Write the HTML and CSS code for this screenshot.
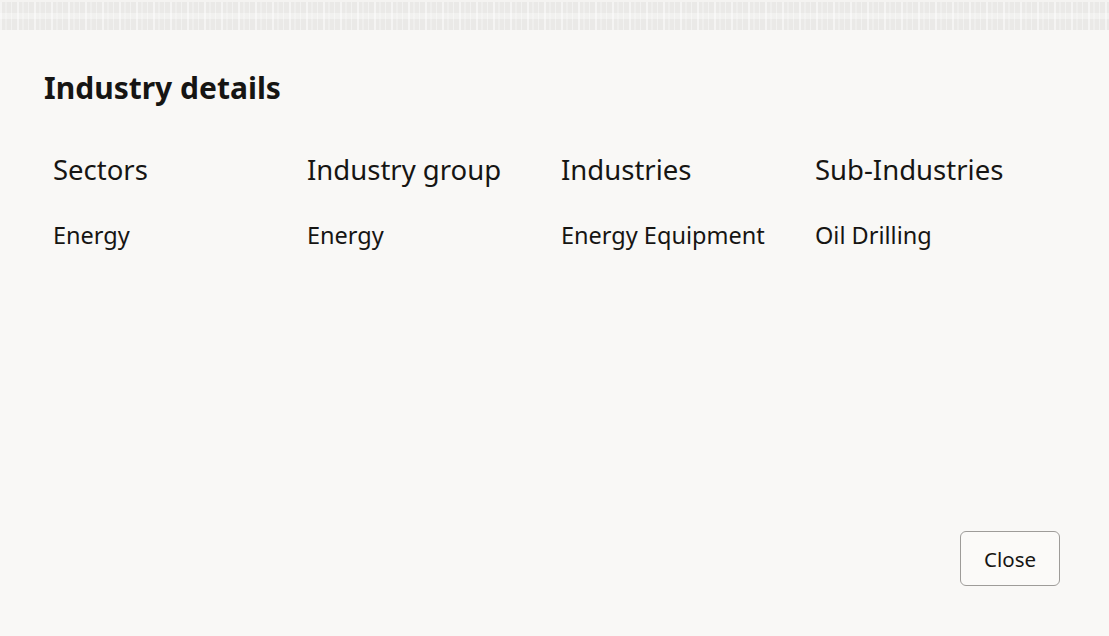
FILE: index.html
```html
<!DOCTYPE html>
<html lang="en">
<head>
    <meta charset="UTF-8">
    <title>Industry details</title>
    <link rel="stylesheet" href="styles.css">
</head>
<body>
    <div class="backdrop-strip"></div>
    <div class="dialog">
        <h1 class="dialog-title">Industry details</h1>
        <div class="details-grid">
            <div class="detail-col">
                <div class="detail-label">Sectors</div>
                <div class="detail-value">Energy</div>
            </div>
            <div class="detail-col">
                <div class="detail-label">Industry group</div>
                <div class="detail-value">Energy</div>
            </div>
            <div class="detail-col">
                <div class="detail-label">Industries</div>
                <div class="detail-value">Energy Equipment</div>
            </div>
            <div class="detail-col">
                <div class="detail-label">Sub-Industries</div>
                <div class="detail-value">Oil Drilling</div>
            </div>
        </div>
        <div class="dialog-footer">
            <button class="btn-close" type="button">Close</button>
        </div>
    </div>
</body>
</html>
```

FILE: styles.css
```css
:root {
    --page-bg: #f9f8f6;
    --strip-bg: #eae9e7;
    --text: #161513;
}

html, body {
    margin: 0;
    padding: 0;
    height: 100%;
}

body {
    display: flex;
    flex-direction: column;
    background-color: var(--page-bg);
    font-family: "Noto Sans", "Open Sans", sans-serif;
    color: var(--text);
    overflow: hidden;
}

/* rozmyte tlo strony za oknem dialogowym */
.backdrop-strip {
    height: 30px;
    border-top: 2px solid #f4f3f1;
    box-sizing: border-box;
    background-color: var(--strip-bg);
    background-image:
        repeating-linear-gradient(90deg, rgba(255,255,255,0.5) 0 2px, transparent 2px 5px, rgba(255,255,255,0.25) 5px 7px, transparent 7px 11px, rgba(255,255,255,0.4) 11px 12px, transparent 12px 17px),
        linear-gradient(180deg, transparent 0 40%, rgba(255,255,255,0.35) 40% 60%, transparent 60%);
}

.dialog {
    flex: 1;
    display: flex;
    flex-direction: column;
    padding: 38px 49px 50px 44px;
}

.dialog-title {
    margin: 0;
    font-size: 30px;
    font-weight: 700;
    line-height: 40px;
}

.details-grid {
    display: grid;
    grid-template-columns: repeat(4, 254px);
    margin-top: 43px;
    padding-left: 9px;
}

.detail-label {
    font-size: 27.5px;
    line-height: 38px;
}

.detail-value {
    margin-top: 30px;
    font-size: 23.5px;
    line-height: 32px;
}

.dialog-footer {
    margin-top: auto;
    display: flex;
    justify-content: flex-end;
}

.btn-close {
    width: 100px;
    height: 55px;
    border: 1px solid #9e9c99;
    border-radius: 6px;
    background-color: #fbfaf8;
    font-family: inherit;
    font-size: 20.5px;
    color: var(--text);
    cursor: pointer;
}
```
